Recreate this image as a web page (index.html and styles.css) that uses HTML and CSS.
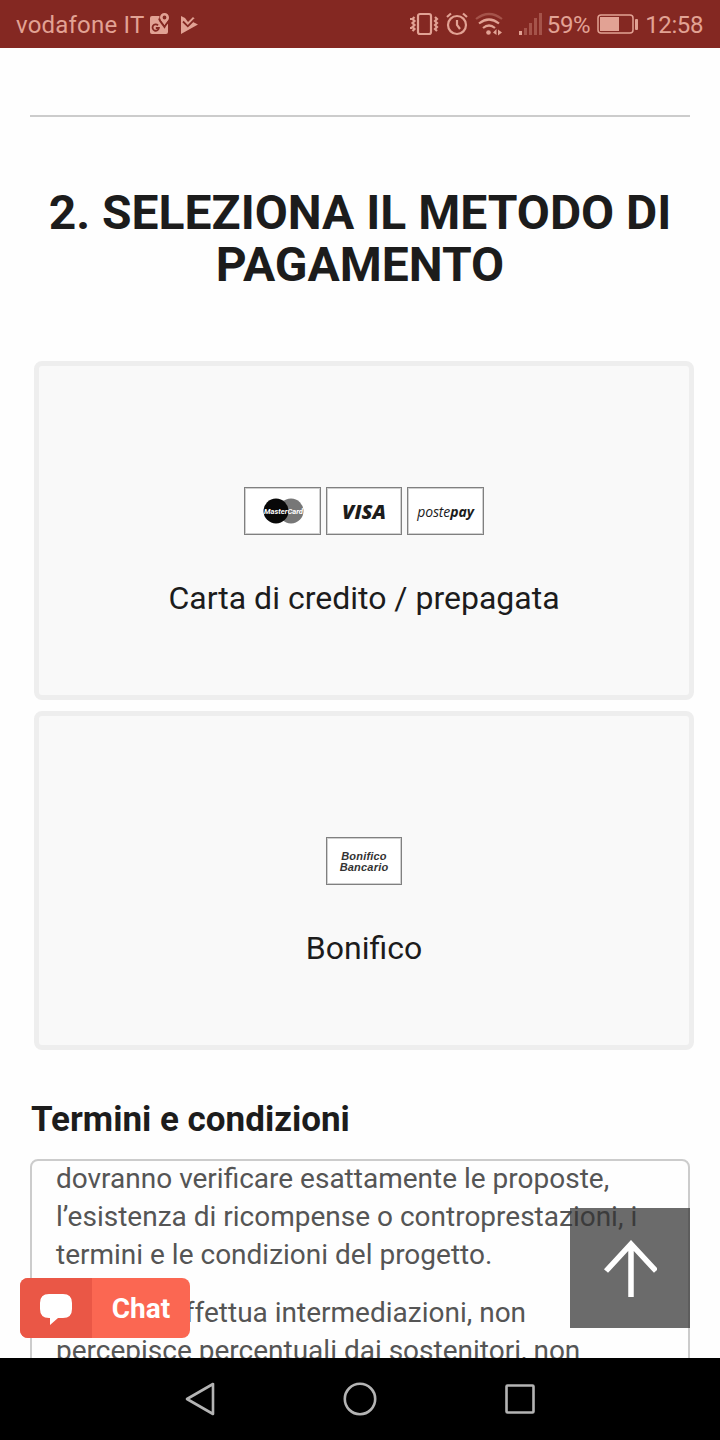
FILE: index.html
```html
<!DOCTYPE html>
<html lang="it">
<head>
    <meta charset="UTF-8">
    <meta name="viewport" content="width=device-width, initial-scale=1.0">
    <title>Metodo di pagamento</title>
    <link rel="stylesheet" href="styles.css">
</head>
<body>
    <div class="status-bar">
        <span class="carrier">vodafone IT</span>
        <svg class="icon-maps" width="20" height="22" viewBox="0 0 20 22">
            <path class="fill" d="M2 3h7.500c-.8 3.500 1.500 6 5 11 1.500-2 2.500-3.500 3.500-5V19a2 2 0 0 1-2 2H2a2 2 0 0 1-2-2V5a2 2 0 0 1 2-2z"/>
            <path class="fill" fill-rule="evenodd" d="M14.500 0a4.500 4.500 0 0 1 4.500 4.500c0 3-2.500 4.500-4.500 8-2-3.500-4.500-5-4.500-8A4.500 4.500 0 0 1 14.500 0zm0 2.600a1.900 1.900 0 1 0 0 3.800 1.900 1.900 0 0 0 0-3.800z"/>
            <path class="cut" d="M8 12.300a3.200 3.200 0 1 0 .9 2.700H5.800"/>
            <path class="cut" d="M9 5.500c.5 3 3.500 5 5.500 8.500 1.500-2.800 3.500-4.500 4.700-6.500"/>
        </svg>
        <svg class="icon-check" width="18" height="20" viewBox="0 0 18 20">
            <path class="fill" d="M1 1l4 2 3 4 5-5 2 2-2 3 5 2.500L1 19z"/>
            <path class="cut" d="M3 6.500l4.800 4.800L15 4"/>
        </svg>
        <div class="status-right">
            <svg class="icon-vibrate" width="30" height="24" viewBox="0 0 30 24">
                <rect class="line" x="8" y="2" width="13" height="20" rx="2"/>
                <path class="line" d="M4.500 5l-2 2 2 2-2 2 2 2-2 2 2 2-2 2M25 5l2 2-2 2 2 2-2 2 2 2-2 2 2 2M1 6v2M1 15v2"/>
            </svg>
            <svg class="icon-alarm" width="22" height="24" viewBox="0 0 22 24">
                <circle class="line" cx="11" cy="13" r="9"/>
                <path class="line" d="M11 8v5l3 4M1 5l4-3.500M21 5l-4-3.500"/>
            </svg>
            <svg class="icon-wifi" width="28" height="24" viewBox="0 0 28 24">
                <path class="line faint" d="M1 7q13-10 26 0"/>
                <path class="line" d="M4 11.500q10-8 20 0M8 16q6-5 12 0"/>
                <circle class="fill" cx="13.500" cy="20.500" r="2.300"/>
                <path class="fill" d="M18 20.500l3.500-3.500v6zM23 17.500v6l4-3z"/>
            </svg>
            <svg class="icon-signal" width="24" height="24" viewBox="0 0 24 24">
                <rect class="fill" x="0" y="19" width="3" height="4"/>
                <path class="fill faint" d="M5 16h3v7H5zM10 11h3v12h-3zM15 6h3v17h-3zM20 1h3v22h-3z"/>
            </svg>
            <span class="percent">59%</span>
            <svg class="icon-battery" width="41" height="22" viewBox="0 0 41 22">
                <rect class="line thin" x="1" y="2" width="35" height="18" rx="3"/>
                <rect class="fill" x="3" y="4" width="19" height="14"/>
                <rect class="fill" x="38" y="6" width="3" height="11" rx="1"/>
            </svg>
            <span class="clock">12:58</span>
        </div>
    </div>

    <main class="page">
        <hr class="divider">
        <h1 class="title">2. SELEZIONA IL METODO DI PAGAMENTO</h1>

        <div class="methods">
            <div class="method">
                <div class="logos">
                    <div class="logo">
                        <svg width="74" height="46" viewBox="0 0 74 46">
                            <circle cx="45" cy="23" r="12.500" fill="#777"/>
                            <circle cx="30" cy="23" r="12.500" fill="#080808"/>
                            <text class="mastercard" x="18" y="26" textLength="39" lengthAdjust="spacingAndGlyphs">MasterCard</text>
                        </svg>
                    </div>
                    <div class="logo"><span class="visa">VISA</span></div>
                    <div class="logo"><span class="postepay">poste<b>pay</b></span></div>
                </div>
                <p class="method-name">Carta di credito / prepagata</p>
            </div>
            <div class="method">
                <div class="logos">
                    <div class="logo"><span class="bank">Bonifico<br>Bancario</span></div>
                </div>
                <p class="method-name">Bonifico</p>
            </div>
        </div>

        <h2 class="terms-title">Termini e condizioni</h2>
        <div class="terms">
            <p>dovranno verificare esattamente le proposte, l’esistenza di ricompense o controprestazioni, i termini e le condizioni del progetto.</p>
            <p class="indented">effettua intermediazioni, non percepisce percentuali dai sostenitori, non</p>
        </div>

        <div class="chat">
            <div class="chat-icon">
                <svg width="34" height="32" viewBox="0 0 34 32">
                    <path d="M10 1h14q9 0 9 9v6q0 9-9 9h-5l-8 7v-7h-1q-9 0-9-9v-6q0-9 9-9z" fill="#fff"/>
                </svg>
            </div>
            <span class="chat-label">Chat</span>
        </div>
        <div class="to-top">
            <svg width="54" height="58" viewBox="0 0 54 58">
                <path d="M28 57V4M3 31L28 4l25 27" fill="none" stroke="#fff" stroke-width="5.500"/>
            </svg>
        </div>
    </main>

    <div class="nav-bar">
        <svg width="34" height="36" viewBox="0 0 34 36">
            <path d="M30 3v30L4 18z"/>
        </svg>
        <svg width="34" height="36" viewBox="0 0 34 36">
            <circle cx="17" cy="18" r="15.200"/>
        </svg>
        <svg width="34" height="36" viewBox="0 0 34 36">
            <rect x="3.500" y="4.500" width="27" height="27" rx="1"/>
        </svg>
    </div>
</body>
</html>
```
FILE: styles.css
```css
:root {
    --bar: #842822;
    --bar-text: #e2a294;
    --text-dark: #1c1c1c;
    --text-light: #555555;
    --line: #cccccc;
    --red: #fb6752;
    --red-dark: #ea5746;
}

* {
    margin: 0;
    padding: 0;
    box-sizing: border-box;
}

body {
    height: 1440px;
    display: flex;
    flex-direction: column;
    overflow: hidden;
    background: #fefefe;
    font-family: Roboto, sans-serif;
    color: var(--text-dark);
}

svg {
    display: block;
    flex: none;
}

.status-bar {
    height: 48px;
    padding: 1px 17px 0 16px;
    display: flex;
    align-items: center;
    background: var(--bar);
    color: var(--bar-text);
    font-size: 24px;
    white-space: nowrap;
}

.carrier {
    width: 134px;
    letter-spacing: 0.2px;
}

.icon-maps {
    margin-top: -2px;
}

.icon-check {
    margin-left: 10px;
}

.status-right {
    margin-left: auto;
    display: flex;
    align-items: center;
}

.icon-vibrate,
.icon-alarm,
.icon-wifi,
.icon-battery {
    margin-top: -1px;
}

.icon-alarm {
    margin-left: 6px;
}

.icon-wifi {
    margin-left: 7px;
}

.icon-signal {
    margin: -1px 4px 0 16px;
}

.icon-battery {
    margin-left: 7px;
    margin-right: 7px;
}

.percent {
    letter-spacing: -0.4px;
}

.clock {
    letter-spacing: -0.4px;
}

.fill {
    fill: var(--bar-text);
}

.line {
    fill: none;
    stroke: var(--bar-text);
    stroke-width: 2.2;
}

.thin {
    stroke-width: 1.5;
}

.cut {
    fill: none;
    stroke: var(--bar);
    stroke-width: 1.8;
}

.faint {
    opacity: 0.35;
}

.page {
    position: relative;
    flex: 1;
    min-height: 0;
    padding: 67px 30px 0;
    overflow: hidden;
}

.divider {
    border: none;
    border-top: 2px solid var(--line);
}

.title {
    margin-top: 70px;
    font-size: 48px;
    line-height: 52px;
    font-weight: 700;
    text-align: center;
}

.methods {
    display: flex;
    flex-direction: column;
    gap: 11px;
    margin: 70px -4px 0 4px;
}

.method {
    height: 339px;
    padding-top: 121px;
    border: 5px solid #eeeeee;
    border-radius: 8px;
    background: #f9f9f9;
    text-align: center;
}

.logos {
    display: flex;
    justify-content: center;
    gap: 5px;
}

.logo {
    width: 76.5px;
    height: 48px;
    display: flex;
    align-items: center;
    justify-content: center;
    border: 1px solid #808080;
    box-shadow: inset 0 0 0 1px #d0d0d0;
    background: #ffffff;
}

.mastercard {
    font-size: 8px;
    font-weight: 700;
    font-style: italic;
    fill: #ffffff;
}

.visa {
    font-family: "Open Sans", sans-serif;
    font-size: 20px;
    font-weight: 800;
    font-style: italic;
}

.postepay {
    font-family: "Open Sans", sans-serif;
    font-size: 14px;
    font-style: italic;
    letter-spacing: -0.1px;
}

.bank {
    padding-top: 1px;
    font-family: "Liberation Sans", sans-serif;
    font-size: 11px;
    line-height: 11px;
    font-weight: 700;
    font-style: italic;
    letter-spacing: 0.2px;
    color: #333333;
}

.method-name {
    margin-top: 43px;
    font-size: 32px;
    line-height: 40px;
}

.terms-title {
    margin: 49px 0 0 1px;
    font-size: 35px;
    line-height: 42px;
    font-weight: 700;
}

.terms {
    height: 300px;
    margin-top: 18px;
    padding: 0 24px;
    border: 2px solid var(--line);
    border-radius: 8px;
    font-size: 28px;
    line-height: 38px;
    color: var(--text-light);
}

.terms p {
    margin: -1px 0 20px;
}

.terms .indented {
    margin-top: 0;
    text-indent: 114px;
}

.chat {
    position: absolute;
    left: 20px;
    top: 1230px;
    width: 170px;
    height: 60px;
    display: flex;
    border-radius: 8px;
    overflow: hidden;
    background: var(--red);
}

.chat-icon {
    width: 72px;
    padding-top: 2px;
    display: flex;
    align-items: center;
    justify-content: center;
    background: var(--red-dark);
}

.chat-label {
    flex: 1;
    font-size: 28px;
    line-height: 61px;
    font-weight: 700;
    text-align: center;
    color: #ffffff;
}

.to-top {
    position: absolute;
    left: 570px;
    top: 1160px;
    width: 120px;
    height: 120px;
    padding-top: 2px;
    display: flex;
    align-items: center;
    justify-content: center;
    background: rgba(50, 50, 50, 0.72);
}

.nav-bar {
    height: 82px;
    display: flex;
    align-items: center;
    justify-content: center;
    gap: 126px;
    background: #000000;
}

.nav-bar svg {
    fill: none;
    stroke: #b4b4b4;
    stroke-width: 2.6;
    stroke-linejoin: round;
}
```
